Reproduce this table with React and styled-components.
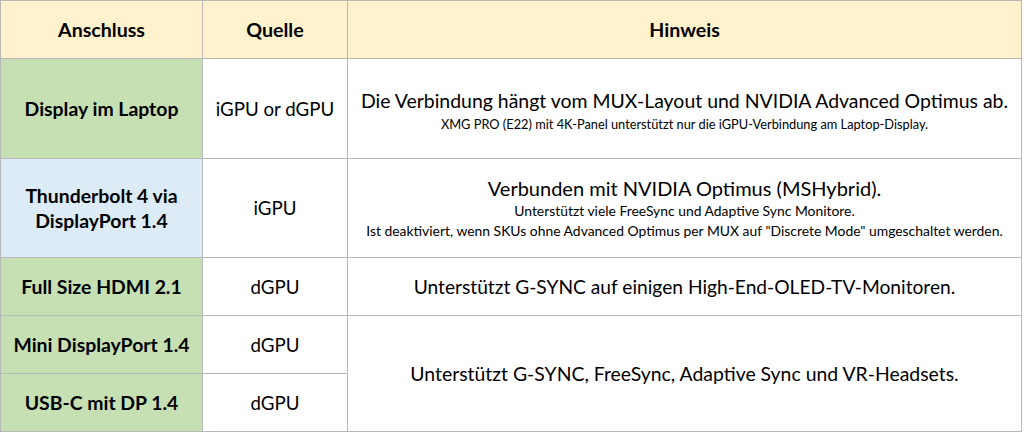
import React from "react";
import styled, { createGlobalStyle } from "styled-components";

const GlobalStyle = createGlobalStyle`
  html, body {
    margin: 0;
    padding: 0;
    background: #ffffff;
  }
  body {
    font-family: "Lato", "Open Sans", sans-serif;
    color: #000000;
  }
`;

const Table = styled.div`
  display: grid;
  grid-template-columns: 201px 144px 673px;
  grid-template-rows: 57px 99px 98px 57px 57px 57px;
  gap: 1px;
  padding: 1px;
  width: max-content;
  background: #b8b8b8;
`;

const Cell = styled.div`
  display: flex;
  flex-direction: column;
  align-items: center;
  justify-content: center;
  text-align: center;
  padding-top: ${(p) => p.$nudge || 0}px;
  background: ${(p) => p.$bg || "#ffffff"};
  grid-row: ${(p) => (p.$span ? `span ${p.$span}` : "auto")};
`;

const HeadText = styled.span`
  font-size: 19.6px;
  font-weight: 700;
  line-height: 24px;
`;

const PortText = styled.span`
  font-size: 19.4px;
  font-weight: 700;
  line-height: 25px;
`;

const SourceText = styled.span`
  font-size: 18.7px;
  line-height: 24px;
`;

const NoteMain = styled.span`
  font-size: ${(p) => p.$size || 19.4}px;
  line-height: 26px;
`;

const NoteSmall = styled.span`
  font-size: ${(p) => p.$size || 13.9}px;
  line-height: 20px;
`;

const HEAD = "#fff2cc";
const GREEN = "#c6e0b4";
const BLUE = "#ddebf7";

export default function App() {
  return (
    <>
      <GlobalStyle />
      <Table>
        <Cell $bg={HEAD}>
          <HeadText>Anschluss</HeadText>
        </Cell>
        <Cell $bg={HEAD}>
          <HeadText>Quelle</HeadText>
        </Cell>
        <Cell $bg={HEAD}>
          <HeadText>Hinweis</HeadText>
        </Cell>

        <Cell $bg={GREEN}>
          <PortText>Display im Laptop</PortText>
        </Cell>
        <Cell>
          <SourceText>iGPU or dGPU</SourceText>
        </Cell>
        <Cell $nudge={4}>
          <NoteMain $size={19.45}>
            Die Verbindung hängt vom MUX-Layout und NVIDIA Advanced Optimus ab.
          </NoteMain>
          <NoteSmall $size={12.8}>
            XMG PRO (E22) mit 4K-Panel unterstützt nur die iGPU-Verbindung am Laptop-Display.
          </NoteSmall>
        </Cell>

        <Cell $bg={BLUE}>
          <PortText>
            Thunderbolt 4 via
            <br />
            DisplayPort 1.4
          </PortText>
        </Cell>
        <Cell>
          <SourceText>iGPU</SourceText>
        </Cell>
        <Cell>
          <NoteMain $size={20}>Verbunden mit NVIDIA Optimus (MSHybrid).</NoteMain>
          <NoteSmall>Unterstützt viele FreeSync und Adaptive Sync Monitore.</NoteSmall>
          <NoteSmall>
            Ist deaktiviert, wenn SKUs ohne Advanced Optimus per MUX auf "Discrete Mode" umgeschaltet werden.
          </NoteSmall>
        </Cell>

        <Cell $bg={GREEN}>
          <PortText>Full Size HDMI 2.1</PortText>
        </Cell>
        <Cell>
          <SourceText>dGPU</SourceText>
        </Cell>
        <Cell>
          <NoteMain $size={19.2}>Unterstützt G-SYNC auf einigen High-End-OLED-TV-Monitoren.</NoteMain>
        </Cell>

        <Cell $bg={GREEN}>
          <PortText>Mini DisplayPort 1.4</PortText>
        </Cell>
        <Cell>
          <SourceText>dGPU</SourceText>
        </Cell>
        <Cell $span={2}>
          <NoteMain>Unterstützt G-SYNC, FreeSync, Adaptive Sync und VR-Headsets.</NoteMain>
        </Cell>

        <Cell $bg={GREEN}>
          <PortText>USB-C mit DP 1.4</PortText>
        </Cell>
        <Cell>
          <SourceText>dGPU</SourceText>
        </Cell>
      </Table>
    </>
  );
}
